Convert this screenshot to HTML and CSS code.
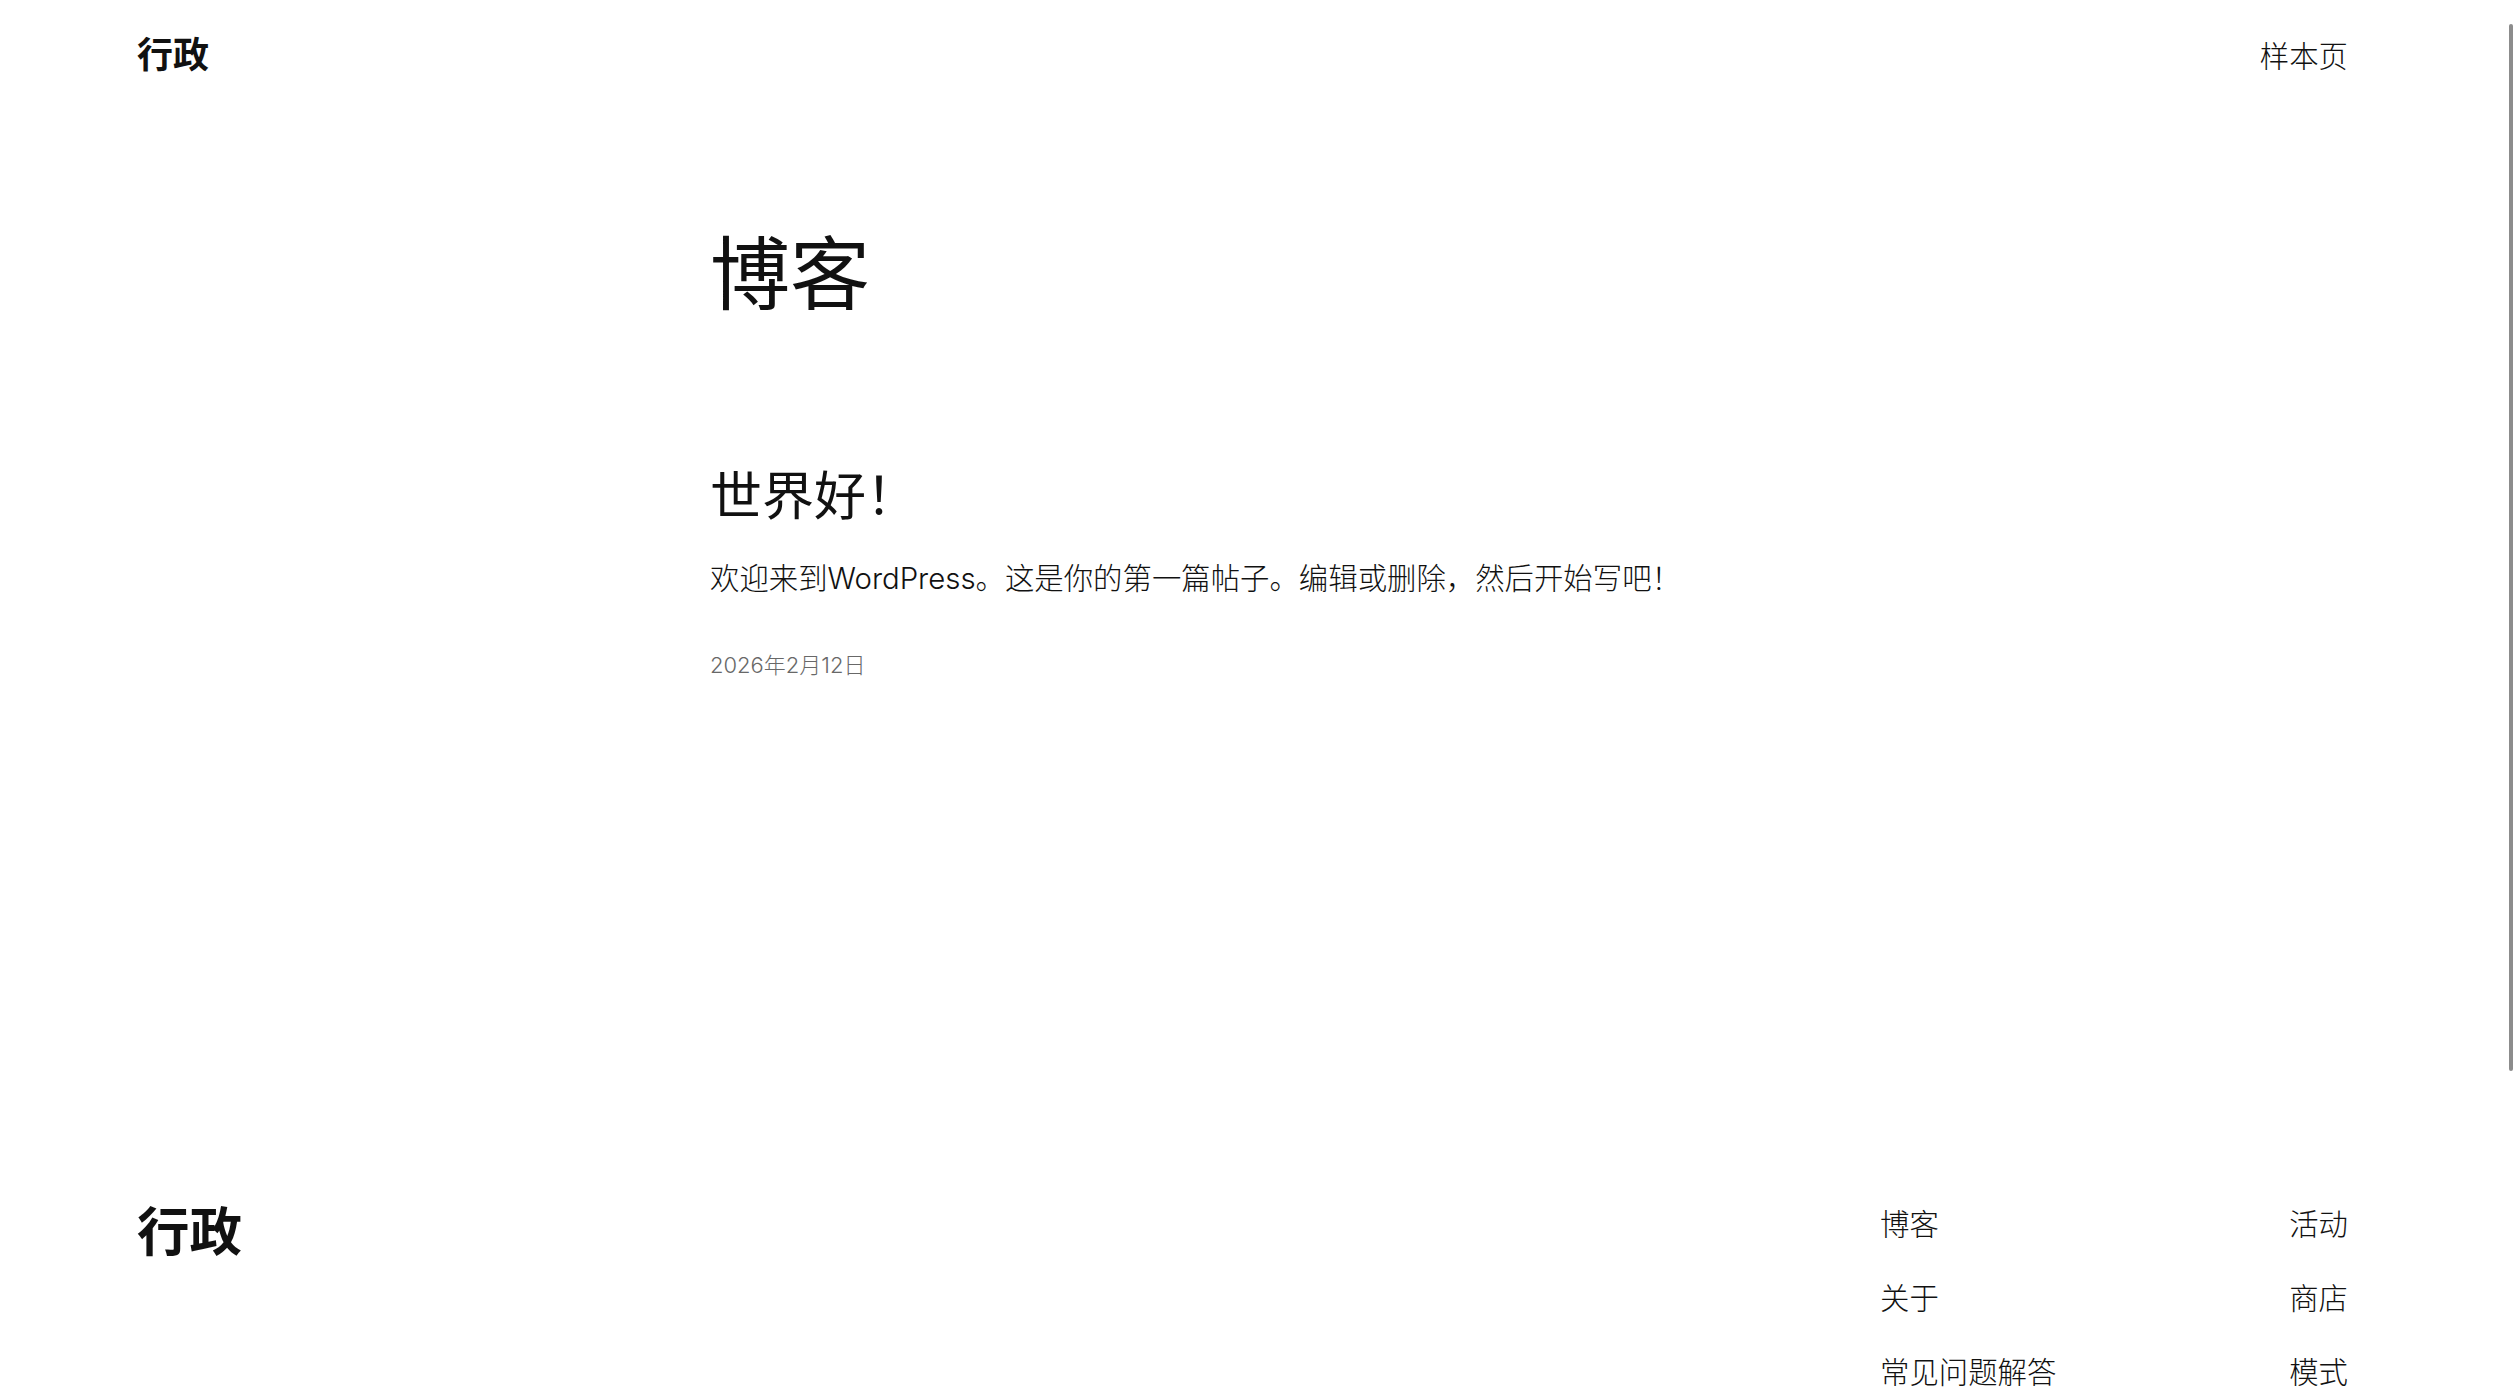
FILE: index.html
```html
<!DOCTYPE html>
<html lang="zh-CN">
<head>
<meta charset="utf-8">
<title>博客 – 行政</title>
<link rel="stylesheet" href="styles.css">
</head>
<body>
<div class="page">
  <header class="site-header">
    <a class="site-title" href="#">行政</a>
    <nav class="header-nav">
      <a href="#">样本页</a>
    </nav>
  </header>

  <main class="main">
    <div class="content">
      <h1 class="page-title">博客</h1>
      <article class="post">
        <h2 class="post-title"><a href="#">世界好！</a></h2>
        <p class="post-excerpt">欢迎来到WordPress。这是你的第一篇帖子。编辑或删除，然后开始写吧！</p>
        <div class="post-date">2026年2月12日</div>
      </article>
    </div>
  </main>

  <footer class="site-footer">
    <a class="footer-title" href="#">行政</a>
    <div class="footer-nav">
      <ul class="footer-col">
        <li><a href="#">博客</a></li>
        <li><a href="#">关于</a></li>
        <li><a href="#">常见问题解答</a></li>
      </ul>
      <ul class="footer-col">
        <li><a href="#">活动</a></li>
        <li><a href="#">商店</a></li>
        <li><a href="#">模式</a></li>
      </ul>
    </div>
  </footer>
</div>
<div class="scroll-thumb"></div>
</body>
</html>
```

FILE: styles.css
```css
html {
  overflow: hidden;
  background: #ffffff;
}

body {
  margin: 0;
  font-family: "Inter", "Noto Sans CJK SC", sans-serif;
  color: #111111;
  background: #ffffff;
}

a {
  color: inherit;
  text-decoration: none;
}

.page {
  padding: 0 165px 0 137px;
}

.site-header {
  display: flex;
  justify-content: space-between;
  align-items: center;
  height: 50px;
  padding-top: 30px;
}

.site-title {
  font-size: 36px;
  font-weight: 700;
  line-height: 50px;
}

.header-nav {
  font-size: 29.4px;
  font-weight: 300;
  line-height: 46px;
  padding-top: 4px;
}

.main {
  padding-top: 146px;
  padding-bottom: 517px;
}

.content {
  max-width: 1065px;
  margin: 0 auto;
}

.page-title {
  margin: 0;
  font-size: 80px;
  font-weight: 400;
  line-height: 96px;
}

.post {
  margin-top: 146px;
}

.post-title {
  margin: 0;
  font-size: 52px;
  font-weight: 400;
  line-height: 58px;
}

.post-excerpt {
  margin: 30px 0 0;
  font-size: 29.4px;
  font-weight: 300;
  line-height: 46px;
}

.post-date {
  margin-top: 45px;
  font-size: 22px;
  font-weight: 300;
  line-height: 36px;
  color: #686868;
}

.site-footer {
  display: flex;
  justify-content: space-between;
  align-items: flex-start;
}

.footer-title {
  font-size: 52.5px;
  font-weight: 700;
  line-height: 64px;
}

.footer-nav {
  display: flex;
  justify-content: space-between;
  width: 468px;
  padding-top: 2px;
}

.footer-col {
  list-style: none;
  margin: 0;
  padding: 0;
  display: flex;
  flex-direction: column;
  gap: 28px;
  font-size: 29.4px;
  font-weight: 300;
  line-height: 46px;
}

.scroll-thumb {
  position: fixed;
  top: 24px;
  right: 0;
  width: 4px;
  height: 1047px;
  background: #8c8c8c;
  border-radius: 2px;
}
```
